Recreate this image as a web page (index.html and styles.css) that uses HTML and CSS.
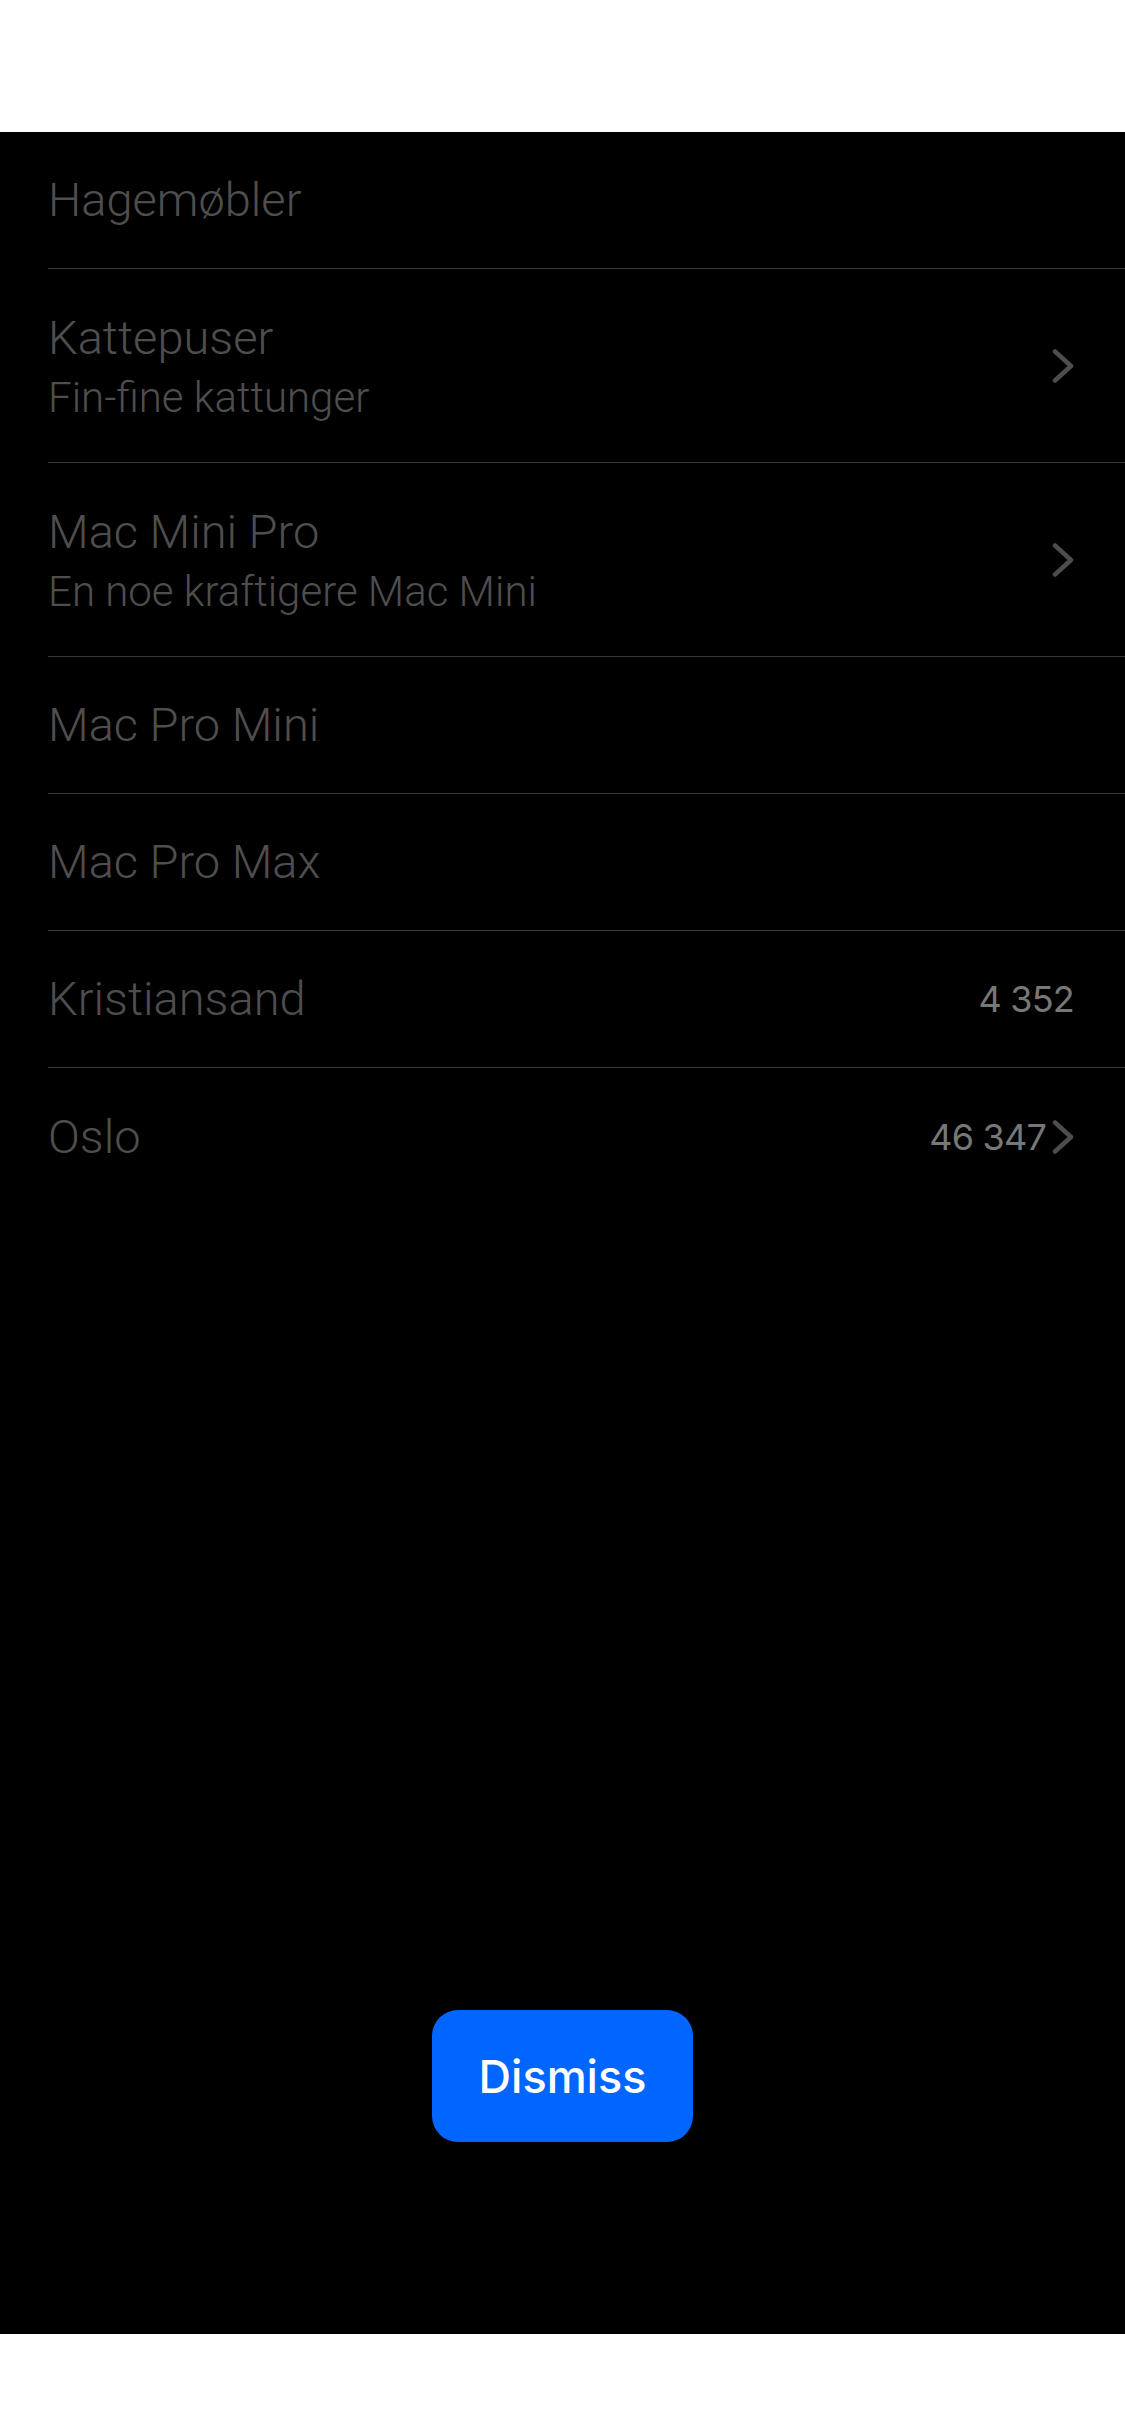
FILE: index.html
```html
<!DOCTYPE html>
<html lang="no">
<head>
<meta charset="utf-8">
<title>Liste</title>
<link rel="stylesheet" href="styles.css">
</head>
<body>
<div class="top-bar"></div>
<main class="screen">
  <ul class="list">
    <li class="row"><div class="texts"><span class="title">Hagemøbler</span></div></li>
    <li class="row row-tall"><div class="texts"><span class="title">Kattepuser</span><span class="subtitle">Fin-fine kattunger</span></div>
      <div class="trail"><svg class="chev" width="22" height="34" viewBox="0 0 22 34"><polyline points="3,2.5 19,17 3,31.5"/></svg></div></li>
    <li class="row row-tall"><div class="texts"><span class="title">Mac Mini Pro</span><span class="subtitle">En noe kraftigere Mac Mini</span></div>
      <div class="trail"><svg class="chev" width="22" height="34" viewBox="0 0 22 34"><polyline points="3,2.5 19,17 3,31.5"/></svg></div></li>
    <li class="row"><div class="texts"><span class="title">Mac Pro Mini</span></div></li>
    <li class="row"><div class="texts"><span class="title">Mac Pro Max</span></div></li>
    <li class="row"><div class="texts"><span class="title">Kristiansand</span></div>
      <div class="trail"><span class="value">4 352</span></div></li>
    <li class="row"><div class="texts"><span class="title">Oslo</span></div>
      <div class="trail"><span class="value">46 347</span><svg class="chev" width="22" height="34" viewBox="0 0 22 34"><polyline points="3,2.5 19,17 3,31.5"/></svg></div></li>
  </ul>
  <div class="actions">
    <button class="dismiss" type="button">Dismiss</button>
  </div>
</main>
<div class="bottom-bar"></div>
</body>
</html>
```
FILE: styles.css
```css
* { box-sizing: border-box; }
html, body { margin: 0; padding: 0; }
body {
  width: 1125px;
  height: 2436px;
  background: #ffffff;
  display: flex;
  flex-direction: column;
  font-family: Roboto, "Liberation Sans", sans-serif;
}
.top-bar { height: 132px; background: #ffffff; flex: none; }
.bottom-bar { flex: 1; background: #ffffff; }
.screen {
  height: 2202px;
  flex: none;
  background: #000000;
  display: flex;
  flex-direction: column;
}
.list {
  list-style: none;
  margin: 0;
  padding: 0 0 0 48px;
}
.row {
  display: flex;
  align-items: center;
  min-height: 137px;
  border-bottom: 1px solid #3a3a3a;
  padding: 0 51px 0 0;
}
.row:last-child { border-bottom: none; }
.row-tall { min-height: 194px; }
.texts {
  flex: 1;
  display: flex;
  flex-direction: column;
}
.title {
  font-weight: 300;
  font-size: 47px;
  line-height: 58px;
  color: #4e4e4e;
}
.subtitle {
  font-weight: 300;
  font-size: 42px;
  line-height: 50px;
  margin-top: 6px;
  color: #4e4e4e;
}
.trail {
  display: flex;
  align-items: center;
  gap: 6px;
}
.value {
  font-family: Inter, "Noto Sans", sans-serif;
  font-size: 36px;
  letter-spacing: -0.8px;
  color: #777777;
}
.chev polyline {
  fill: none;
  stroke: #4d4d4d;
  stroke-width: 4.5;
  stroke-linecap: round;
  stroke-linejoin: round;
}
.actions {
  flex: 1;
  display: flex;
  align-items: flex-end;
  justify-content: center;
  padding-bottom: 192px;
}
.dismiss {
  width: 261px;
  height: 132px;
  border: none;
  border-radius: 26px;
  background: #0066ff;
  color: #ffffff;
  font-family: Inter, "Noto Sans", sans-serif;
  font-weight: 500;
  font-size: 45px;
  padding: 0;
}
```
